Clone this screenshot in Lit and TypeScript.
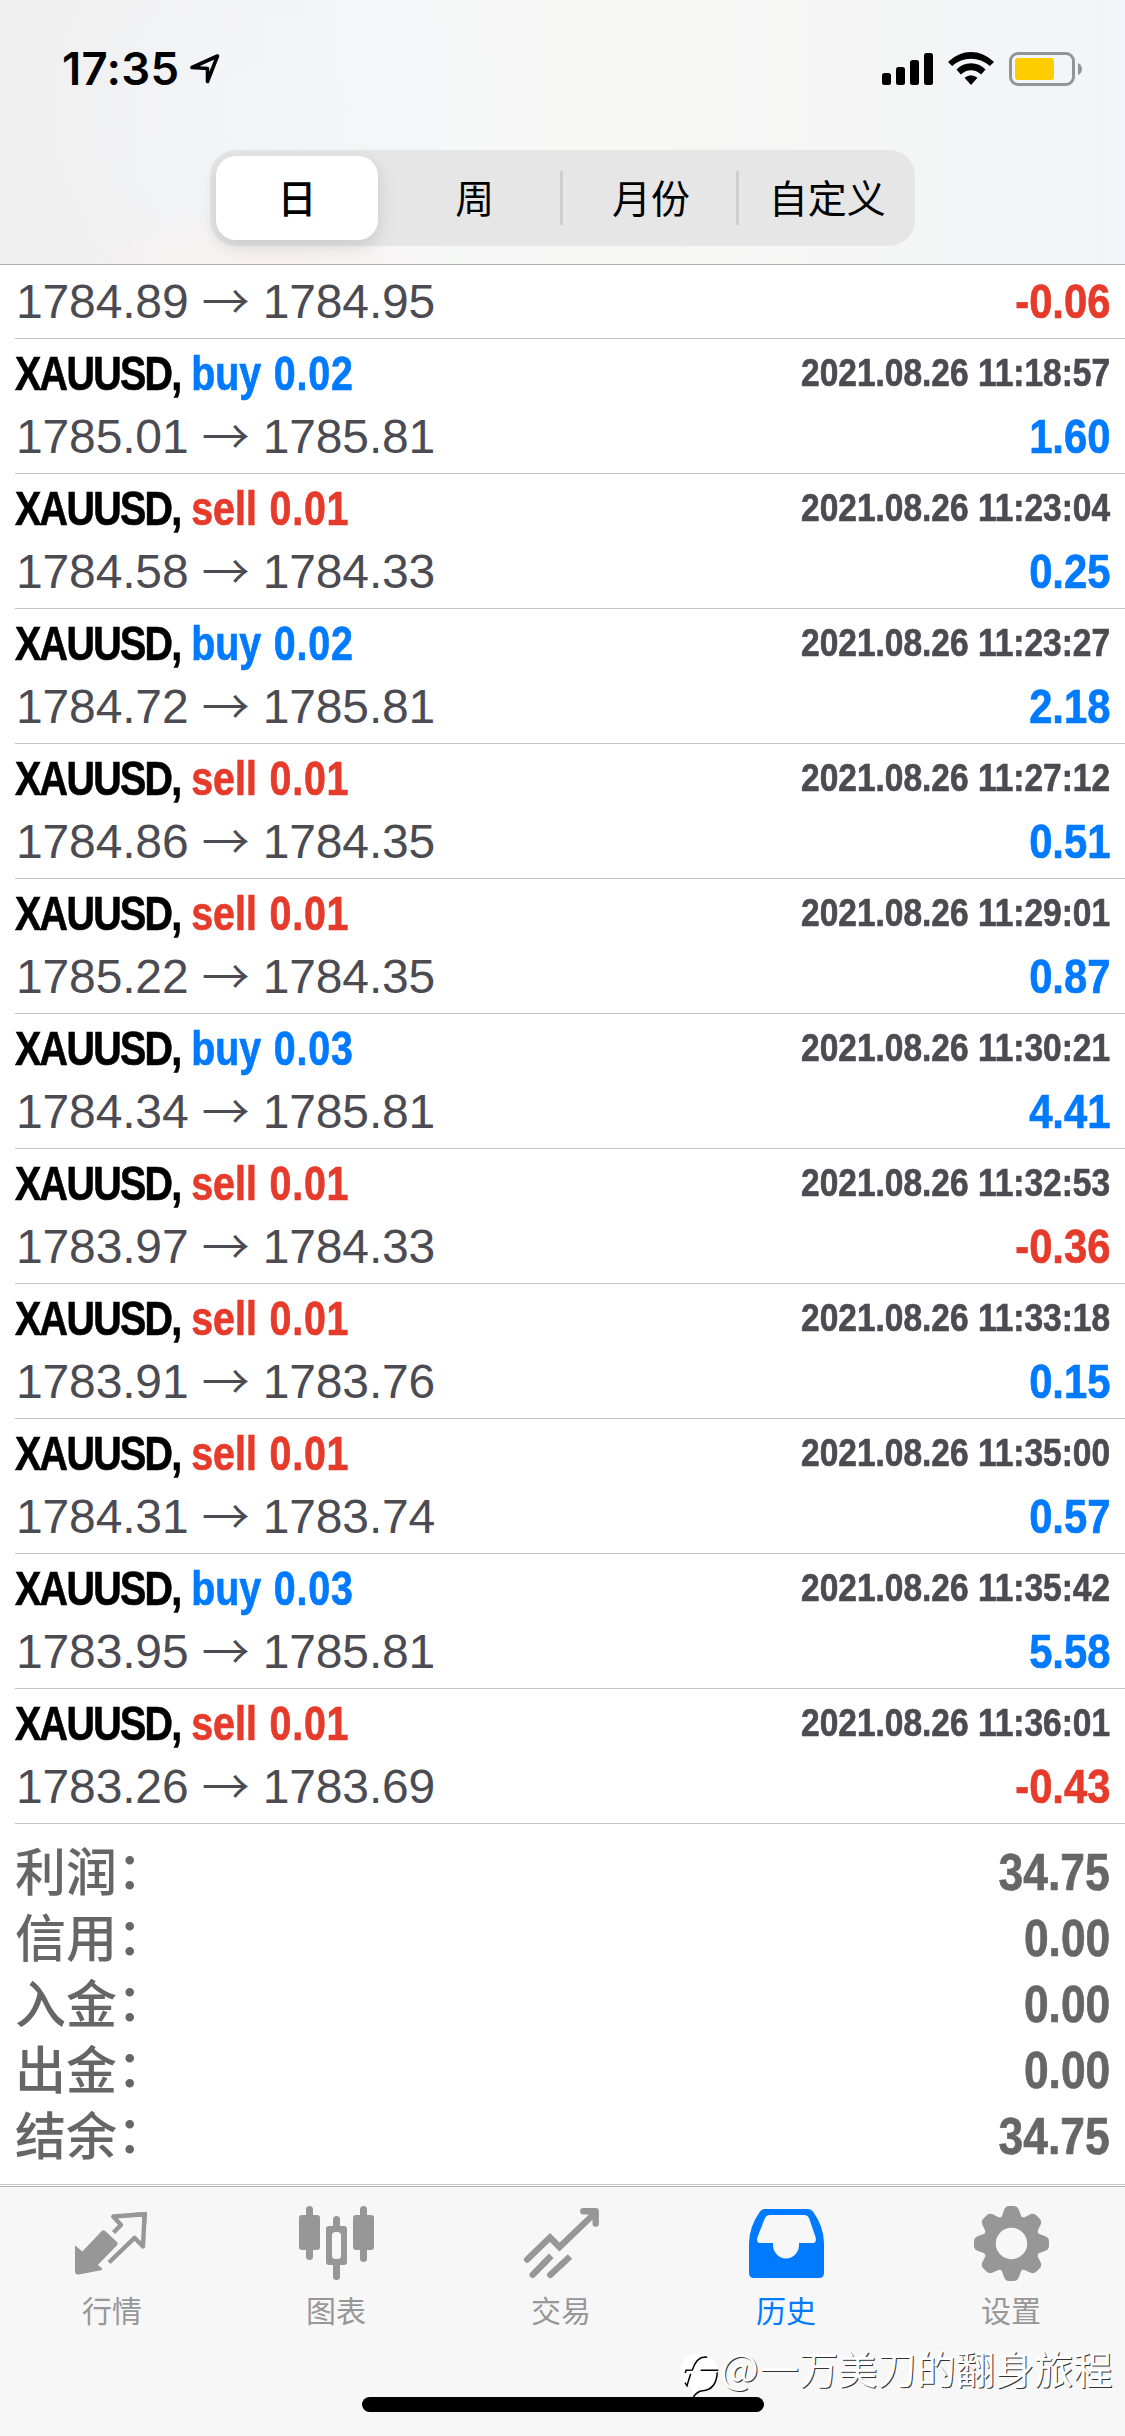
import { LitElement, html, svg, css } from "lit";
import { customElement } from "lit/decorators.js";

type Deal = { side: string; lot: string; time: string; from: string; to: string; profit: string };

const d = (side: string, lot: string, time: string, from: string, to: string, profit: string): Deal => ({
  side, lot, time, from, to, profit,
});

const deals: Deal[] = [
  d("", "", "", "1784.89", "1784.95", "-0.06"),
  d("buy", "0.02", "11:18:57", "1785.01", "1785.81", "1.60"),
  d("sell", "0.01", "11:23:04", "1784.58", "1784.33", "0.25"),
  d("buy", "0.02", "11:23:27", "1784.72", "1785.81", "2.18"),
  d("sell", "0.01", "11:27:12", "1784.86", "1784.35", "0.51"),
  d("sell", "0.01", "11:29:01", "1785.22", "1784.35", "0.87"),
  d("buy", "0.03", "11:30:21", "1784.34", "1785.81", "4.41"),
  d("sell", "0.01", "11:32:53", "1783.97", "1784.33", "-0.36"),
  d("sell", "0.01", "11:33:18", "1783.91", "1783.76", "0.15"),
  d("sell", "0.01", "11:35:00", "1784.31", "1783.74", "0.57"),
  d("buy", "0.03", "11:35:42", "1783.95", "1785.81", "5.58"),
  d("sell", "0.01", "11:36:01", "1783.26", "1783.69", "-0.43"),
];

const totals = [
  ["利润", "34.75"],
  ["信用", "0.00"],
  ["入金", "0.00"],
  ["出金", "0.00"],
  ["结余", "34.75"],
];

const tooth = (a: number) => svg`<path transform="rotate(${a} 37.5 37.5)"
  d="M26 13 Q28.500 10 29.500 5.500 Q31 0 35 0 H40 Q44 0 45.500 5.500 Q46.500 10 49 13 L37.500 30 Z"/>`;

const icons = {
  quotes: svg`
    <path d="M0 41 Q0 39 1.500 40.500 L7.300 45.500 L26.800 25 Q28.500 23.300 30.200 25 L42 36 Q43.600 37.500 42 39.200 L22.800 59 L27 62.300 Q28 64 26 64.300 L4 68.500 Q0 69 0 65.500 Z"/>
    <g fill="none" stroke="currentColor" stroke-width="4.400">
      <path d="M38.500 26.500 L46 19 L38.200 10.500 L69.600 8.200 L68 40.500 L59.500 31.800 L34 56.500" stroke-linejoin="round"/>
      <path d="M60 8.900 L69.700 8.200 L69.200 18" stroke-linejoin="miter"/>
    </g>`,
  chart: svg`
    <rect x="7" y="0" width="7" height="54" rx="3.500"/><rect x="0" y="9" width="21" height="35" rx="3"/>
    <rect x="61" y="0" width="7" height="56" rx="3.500"/><rect x="54" y="9" width="21" height="35" rx="3"/>
    <rect x="34" y="10" width="7" height="16" rx="3.500"/><rect x="34" y="54" width="7" height="20" rx="3.500"/>
    <path fill-rule="evenodd" d="M30 20 H45 Q48 20 48 23 V56 Q48 59 45 59 H30 Q27 59 27 56 V23 Q27 20 30 20 Z M36.500 26 Q33 26 33 29.500 V49.500 Q33 53 36.500 53 H38.500 Q42 53 42 49.500 V29.500 Q42 26 38.500 26 Z"/>`,
  trade: svg`
    <g fill="none" stroke="currentColor" stroke-width="6.400" stroke-linecap="round">
      <path d="M3.200 53.500 L26 31.500 L35.500 41 L71 7" stroke-linejoin="miter"/>
      <path d="M59.300 5.200 H71.700 V17.600" stroke-linejoin="round"/>
      <path d="M8.700 68.800 L21 56.300"/><path d="M26.300 68.800 L38 58"/>
      <path d="M19 58.300 L27.300 49.800" stroke-linecap="butt"/><path d="M36 60 L46 50.500" stroke-linecap="butt"/>
    </g>`,
  history: svg`
    <path fill-rule="evenodd" d="M15 3 H59 Q62 3 64 5.500 Q74.500 20 75 37 V67 Q75 72 70 72 H5 Q0 72 0 67 V37 Q0.500 20 11 5.500 Q13 3 15 3 Z
      M21 9 Q17.500 9 16 12 L8.500 31 Q7 37 11.500 37 H24 V39 A13 13.500 0 0 0 50 39 V37 H63.500 Q68 37 66.500 31 L60 12 Q58.500 9 55 9 Z"/>`,
  settings: svg`
    <mask id="hub"><rect width="75" height="75" fill="#fff"/><circle cx="37.500" cy="37.500" r="15.700" fill="#000"/></mask>
    <g mask="url(#hub)"><circle cx="37.500" cy="37.500" r="28.500"/>${[0, 45, 90, 135, 180, 225, 270, 315].map(tooth)}</g>`,
};

const tabs: [string, unknown, boolean][] = [
  ["行情", icons.quotes, false],
  ["图表", icons.chart, false],
  ["交易", icons.trade, false],
  ["历史", icons.history, true],
  ["设置", icons.settings, false],
];

@customElement("app-root")
export class AppRoot extends LitElement {
  static styles = css`
    :host { display: block; }
    * { box-sizing: border-box; }
    .screen {
      position: relative; width: 1125px; height: 2436px; overflow: hidden; background: #fff;
      display: flex; flex-direction: column; font-family: "Liberation Sans", "Noto Sans CJK SC", sans-serif;
    }
    .header {
      height: 265px; flex: none; border-bottom: 1px solid #b0b0b1; display: flex; flex-direction: column;
      background:
        radial-gradient(ellipse 200px 60px at 270px 265px, #f8f2f1, transparent),
        radial-gradient(ellipse 240px 220px at 270px 110px, #f4f5f9, transparent),
        linear-gradient(90deg, #efefef 0, #f0f0f0 120px, #f6f7f7 400px, #f7f7f6 600px, #f5f5f5 850px, #f4f5f7 1040px, #f2f5f9 1125px);
    }
    .status { height: 150px; display: flex; justify-content: space-between; align-items: flex-start; padding: 50px 41px 0 61px; }
    .clock { display: flex; align-items: flex-start; }
    .time { font: 600 45.5px/38px Inter, sans-serif; width: 129px; padding-left: 1px; letter-spacing: 0.3px; white-space: nowrap; }
    .segments { width: 705px; height: 96px; margin-left: 210px; border-radius: 26px; background: #e6e6e7; display: grid; grid-template-columns: repeat(4, 1fr); align-items: center; }
    .segment { height: 54px; display: flex; align-items: center; justify-content: center; font: 400 39px/54px "Noto Sans CJK SC", sans-serif; color: #000; border-right: 3px solid transparent; padding: 0 0 4px 4px; }
    .ruled { border-right-color: #cfcfd1; }
    .active { height: 84px; margin: 0 8px 0 6px; padding: 0 0 4px; border: 0; border-radius: 20px; background: #fff; font-weight: 500; box-shadow: 0 6px 18px rgba(0, 0, 0, 0.13); }
    .deals { flex: none; height: 1559px; display: flex; flex-direction: column; justify-content: flex-end; }
    .deal { height: 135px; margin-left: 15px; border-bottom: 1px solid #c5c5c7; padding: 4px 15px 0 0; flex: none; }
    .short { height: 74px; padding-top: 6px; }
    .line { display: flex; justify-content: space-between; height: 63px; white-space: nowrap; }
    .bold { font-weight: 700; -webkit-text-stroke: 0.7px currentColor; }
    .name { font-size: 48px; line-height: 62px; transform: scaleX(0.82); transform-origin: left; }
    .symbol { letter-spacing: -2px; color: #000; margin-right: 1.5px; }
    .lot { letter-spacing: 1px; margin-left: 2px; }
    .buy, .gain { color: #007aff; }
    .sell, .loss { color: #e63a2a; }
    .stamp { font-size: 39px; line-height: 60px; color: #4c4b52; transform: scaleX(0.858); transform-origin: right; }
    .prices { font-size: 48px; line-height: 62px; color: #4c4b52; padding-left: 1px; letter-spacing: -0.15px; }
    .arrow { font-family: "Noto Sans CJK SC"; font-weight: 350; line-height: 40px; vertical-align: -1px; }
    .profit { font-size: 48px; line-height: 62px; transform: scaleX(0.87); transform-origin: right; }
    .totals { flex: none; height: 361px; padding: 15px 15px 0; border-bottom: 1px solid #c8c8c8; display: flex; flex-direction: column; }
    .total { height: 66px; display: flex; justify-content: space-between; color: #666; white-space: nowrap; }
    .label { font-size: 51px; line-height: 69px; font-weight: 500; }
    .colon { vertical-align: 2px; line-height: 40px; }
    .value { font-size: 51px; line-height: 68px; transform: scaleX(0.87); transform-origin: right; }
    .tabs { margin-top: 1px; flex: 1; border-top: 1px solid #b0b0b1; background: #f7f7f7; display: grid; grid-template-columns: 225px 223px 227px 223px 227px; padding-top: 19px; }
    .tab { display: flex; flex-direction: column; align-items: center; color: #979797; }
    .glyph { width: 75px; height: 75px; fill: currentColor; overflow: visible; }
    .caption { font: 400 30px/36px "Noto Sans CJK SC", sans-serif; margin-top: 10px; padding-right: 1px; }
    .current { color: #007aff; }
    .home { position: absolute; left: 362px; top: 2397px; width: 402px; height: 15px; border-radius: 8px; background: #000; }
    .mark { position: absolute; left: 680px; top: 2341px; display: flex; align-items: center; height: 52px; }
    .logo { width: 41px; height: 46px; margin-top: 16px; }
    .author { font: 400 39.2px/52px "Noto Sans CJK SC", sans-serif; color: #fff; text-shadow: 1px 1px 0 #333; white-space: nowrap; }
    .at { font-size: 41px; line-height: 40px; margin-left: -1px; margin-right: 1px; }
  `;

  private deal(x: Deal) {
    return html`<div class="deal ${x.side ? "" : "short"}">
      ${x.side
        ? html`<div class="line">
            <div class="bold name"><span class="symbol">XAUUSD, </span><span class=${x.side}>${x.side} <span class="lot">${x.lot}</span></span></div>
            <div class="bold stamp">2021.08.26 ${x.time}</div>
          </div>`
        : ""}
      <div class="line">
        <div class="prices">${x.from} <span class="arrow">→</span> ${x.to}</div>
        <div class="bold profit ${x.profit.startsWith("-") ? "loss" : "gain"}">${x.profit}</div>
      </div>
    </div>`;
  }

  render() {
    return html`<div class="screen">
      <div class="header">
        <div class="status">
          <div class="clock">
            <span class="time">17:35</span>
            <svg width="31" height="38" viewBox="0 0 31 38"><path d="M2 17.500 L27.500 6 L17.500 31.500 V18.500 Z" fill="none" stroke="#000" stroke-width="3.600" stroke-linejoin="round"/></svg>
          </div>
          <svg width="202" height="38" viewBox="882 50 202 38">
            <rect x="882" y="73" width="9" height="12" rx="2.500"/><rect x="896" y="67" width="9" height="18" rx="2.500"/>
            <rect x="910" y="60" width="9" height="25" rx="2.500"/><rect x="924" y="53" width="9" height="32" rx="2.500"/>
            <path d="M948.500 61.500 Q958.500 52 971 52 Q983.500 52 993.500 61.500 Q994 62 993.500 62.500 L989.800 66 Q981.500 58.800 971 58.800 Q960.500 58.800 952.200 66 L948.500 62.500 Q948 62 948.500 61.500 Z"/>
            <path d="M956.500 69.500 Q962.500 63.300 971 63.300 Q979.500 63.300 985.500 69.500 L981.200 74.500 Q976.500 70.200 971 70.200 Q965.500 70.200 960.800 74.500 Z"/>
            <path d="M964.500 77.800 Q971 72.500 977.500 77.800 L971 85 Z"/>
            <rect x="1010.500" y="53.500" width="63" height="31" rx="7.500" fill="none" stroke="#949497" stroke-width="3"/>
            <rect x="1015" y="58" width="39" height="22" rx="3" fill="#ffcc00"/>
            <path d="M1078 63 Q1082 65 1082 69 Q1082 73 1078 75 Z" fill="#949497"/>
          </svg>
        </div>
        <div class="segments">
          <div class="segment active">日</div>
          <div class="segment ruled">周</div>
          <div class="segment ruled">月份</div>
          <div class="segment">自定义</div>
        </div>
      </div>
      <div class="deals">${deals.map((x) => this.deal(x))}</div>
      <div class="totals">
        ${totals.map(([k, v]) => html`<div class="total"><span class="label">${k}<span class="colon">：</span></span><span class="bold value">${v}</span></div>`)}
      </div>
      <div class="tabs">
        ${tabs.map(([name, icon, on]) => html`<div class="tab ${on ? "current" : ""}">
          <svg class="glyph" viewBox="0 0 75 75">${icon}</svg><span class="caption">${name}</span>
        </div>`)}
      </div>
      <div class="home"></div>
      <div class="mark">
        <svg class="logo" viewBox="30 36 123 138">
          <path d="M88 40 A55 52 0 0 1 143 93 Q142 146 98 152 Q82 153 70 171 L66 142 Q31 130 31 92 A55 52 0 0 1 88 40 Z" fill="#fff"/>
          <path d="M112 52 Q82 46 67 90 L48 91 L46 99 M92 91 H145 M142 97 Q138 150 98 152 Q82 153 70 171 M62 101 L51 137 L45 128" fill="none" stroke="#000" stroke-width="4.500"/>
        </svg>
        <span class="author"><span class="at">@</span>一万美刀的翻身旅程</span>
      </div>
    </div>`;
  }
}
